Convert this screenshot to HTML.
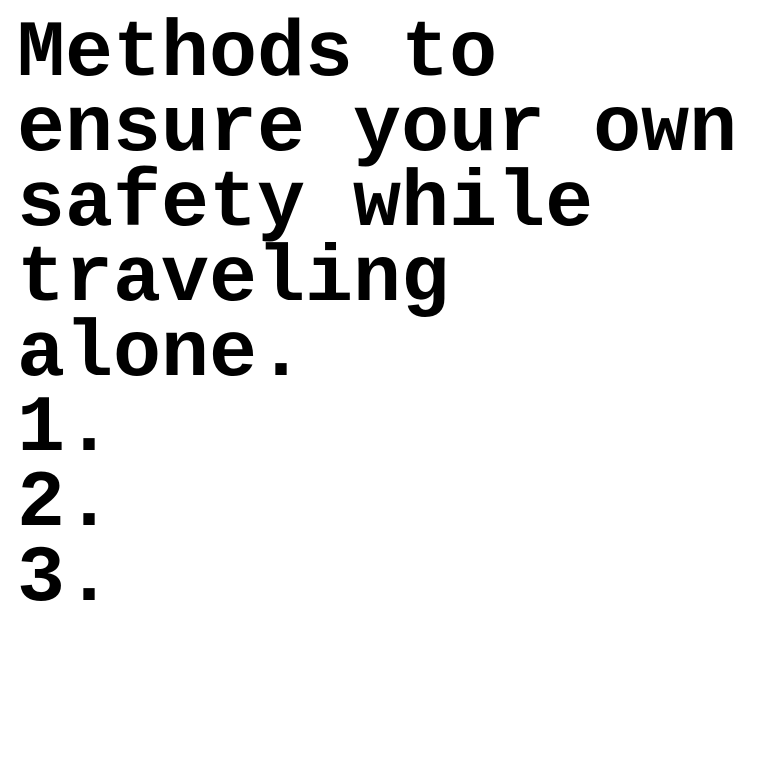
<!DOCTYPE html>
<html><head><style>
html,body{margin:0;padding:0;background:#fff;width:760px;height:760px;overflow:hidden}
.t{position:absolute;left:17px;top:17px;font-family:"Courier New","Nimbus Mono PS","Nimbus Mono L","FreeMono","Liberation Mono",monospace;font-weight:bold;font-size:80px;line-height:75px;color:#000;white-space:pre}
</style></head><body>
<div class="t">Methods to
ensure your own
safety while
traveling
alone.
1.
2.
3.</div>
</body></html>
